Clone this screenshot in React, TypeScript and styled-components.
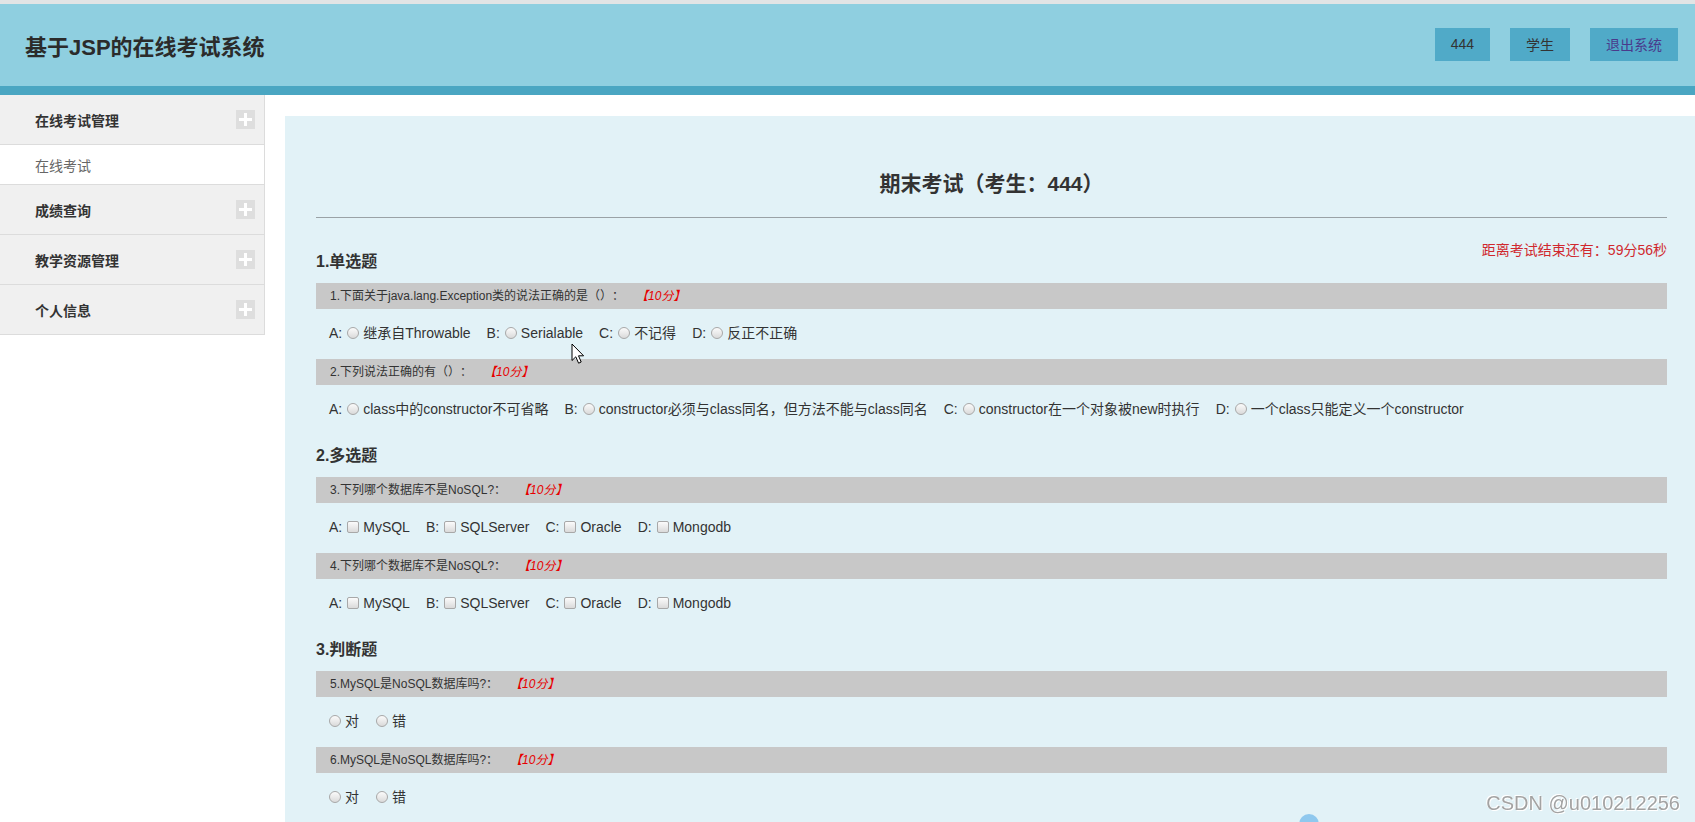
import styled, { createGlobalStyle } from "styled-components";

type Kind = "radio" | "checkbox";

interface Question {
  no: number;
  title: string;
  kind: Kind;
  options: string[];
  lettered: boolean;
}

interface Section {
  title: string;
  questions: Question[];
}

const sections: Section[] = [
  {
    title: "1.单选题",
    questions: [
      {
        no: 1,
        title: "下面关于java.lang.Exception类的说法正确的是（）：",
        kind: "radio",
        lettered: true,
        options: ["继承自Throwable", "Serialable", "不记得", "反正不正确"],
      },
      {
        no: 2,
        title: "下列说法正确的有（）：",
        kind: "radio",
        lettered: true,
        options: [
          "class中的constructor不可省略",
          "constructor必须与class同名，但方法不能与class同名",
          "constructor在一个对象被new时执行",
          "一个class只能定义一个constructor",
        ],
      },
    ],
  },
  {
    title: "2.多选题",
    questions: [
      {
        no: 3,
        title: "下列哪个数据库不是NoSQL?：",
        kind: "checkbox",
        lettered: true,
        options: ["MySQL", "SQLServer", "Oracle", "Mongodb"],
      },
      {
        no: 4,
        title: "下列哪个数据库不是NoSQL?：",
        kind: "checkbox",
        lettered: true,
        options: ["MySQL", "SQLServer", "Oracle", "Mongodb"],
      },
    ],
  },
  {
    title: "3.判断题",
    questions: [
      {
        no: 5,
        title: "MySQL是NoSQL数据库吗?：",
        kind: "radio",
        lettered: false,
        options: ["对", "错"],
      },
      {
        no: 6,
        title: "MySQL是NoSQL数据库吗?：",
        kind: "radio",
        lettered: false,
        options: ["对", "错"],
      },
    ],
  },
];

const menus = [
  { title: "在线考试管理", items: ["在线考试"] },
  { title: "成绩查询", items: [] },
  { title: "教学资源管理", items: [] },
  { title: "个人信息", items: [] },
];

const LETTERS = ["A", "B", "C", "D"];

export default function App() {
  return (
    <>
      <GlobalStyle />
      <Header>
        <Brand>基于JSP的在线考试系统</Brand>
        <HeaderActions>
          <HeaderButton href="#">444</HeaderButton>
          <HeaderButton href="#">学生</HeaderButton>
          <HeaderButton href="#" $link>
            退出系统
          </HeaderButton>
        </HeaderActions>
      </Header>

      <Layout>
        <Sidebar>
          {menus.map((menu) => (
            <div key={menu.title}>
              <MenuHeader>
                {menu.title}
                <PlusBox />
              </MenuHeader>
              {menu.items.map((item) => (
                <MenuItem key={item}>{item}</MenuItem>
              ))}
            </div>
          ))}
        </Sidebar>

        <Content>
          <Panel>
            <ExamTitle>期末考试（考生：444）</ExamTitle>

            {sections.map((section, i) => (
              <div key={section.title}>
                <SectionHead $first={i === 0}>
                  <SectionTitle>{section.title}</SectionTitle>
                  {i === 0 && <Timer>距离考试结束还有：59分56秒</Timer>}
                </SectionHead>

                {section.questions.map((q) => (
                  <div key={q.no}>
                    <QuestionBar>
                      {q.no}.{q.title}
                      <Score>【10分】</Score>
                    </QuestionBar>
                    <Options $lettered={q.lettered}>
                      {q.options.map((opt, idx) => (
                        <Option key={opt}>
                          {q.lettered && <Letter>{LETTERS[idx]}:</Letter>}
                          <Control
                            type={q.kind}
                            name={`q${q.no}`}
                            $kind={q.kind}
                            $lettered={q.lettered}
                          />
                          {opt}
                        </Option>
                      ))}
                    </Options>
                  </div>
                ))}
              </div>
            ))}
          </Panel>
        </Content>
      </Layout>

      <Cursor width="14" height="22" viewBox="0 0 14 22">
        <path
          d="M1 1 L1 17.5 L4.8 13.8 L7.6 20.2 L10.2 19 L7.5 12.8 L12.6 12.8 Z"
          fill="#fff"
          stroke="#000"
          strokeWidth="1"
          strokeLinejoin="round"
        />
      </Cursor>
      <FloatDot />
      <Watermark>CSDN @u010212256</Watermark>
    </>
  );
}

const GlobalStyle = createGlobalStyle`
  html, body {
    margin: 0;
    padding: 0;
    background: #fff;
  }
  body {
    font-family: "Liberation Sans", Arial, "Noto Sans CJK SC", sans-serif;
    font-size: 14px;
    color: #333;
    overflow: hidden;
    text-spacing-trim: space-all;
  }
`;

const Header = styled.header`
  display: flex;
  align-items: center;
  justify-content: space-between;
  height: 82px;
  padding: 0 17px 0 25px;
  background: #8fcfe0;
  border-top: 4px solid #e2e4e5;
  border-bottom: 9px solid #4aa6c2;
`;

const Brand = styled.h1`
  margin: 0;
  font-size: 22px;
  font-weight: bold;
  color: #2b2b2b;
`;

const HeaderActions = styled.div`
  display: flex;
  gap: 20px;
  margin-top: -2px;
`;

const HeaderButton = styled.a<{ $link?: boolean }>`
  display: flex;
  align-items: center;
  height: 33px;
  padding: 0 16px;
  background: #50aac8;
  color: ${(p) => (p.$link ? "#4a3a8c" : "#333")};
  font-size: 14px;
  text-decoration: none;
`;

const Layout = styled.div`
  display: flex;
  align-items: flex-start;
`;

const Sidebar = styled.nav`
  flex: 0 0 265px;
  box-sizing: border-box;
  border-right: 1px solid #dcdcdc;
`;

const MenuHeader = styled.div`
  display: flex;
  align-items: center;
  justify-content: space-between;
  height: 49px;
  padding: 0 9px 0 35px;
  background: #f0f0f0;
  border-bottom: 1px solid #dcdcdc;
  font-size: 14px;
  font-weight: bold;
  color: #333;
`;

const PlusBox = styled.span`
  position: relative;
  width: 19px;
  height: 19px;
  background: #dedede;

  &::before,
  &::after {
    content: "";
    position: absolute;
    background: #fff;
  }
  &::before {
    left: 3px;
    right: 3px;
    top: 8px;
    height: 3px;
  }
  &::after {
    top: 3px;
    bottom: 3px;
    left: 8px;
    width: 3px;
  }
`;

const MenuItem = styled.div`
  display: flex;
  align-items: center;
  height: 39px;
  padding-left: 35px;
  background: #fff;
  border-bottom: 1px solid #dcdcdc;
  font-size: 14px;
  color: #666;
`;

const Content = styled.main`
  flex: 1;
  padding: 21px 0 0 20px;
`;

const Panel = styled.section`
  min-height: 900px;
  padding: 0 28px 40px 31px;
  background: #e2f2f7;
`;

const ExamTitle = styled.h2`
  margin: 0;
  padding: 55px 0 21px;
  border-bottom: 1px solid #9aa2a6;
  text-align: center;
  font-size: 21px;
  line-height: 25px;
  font-weight: bold;
  color: #333;
`;

const SectionHead = styled.div<{ $first: boolean }>`
  display: flex;
  align-items: flex-end;
  justify-content: space-between;
  margin: ${(p) => (p.$first ? "23px" : "10px")} 0 10px;
`;

const SectionTitle = styled.h3`
  margin: 0;
  font-size: 16px;
  line-height: 22px;
  font-weight: bold;
  color: #333;
`;

const Timer = styled.div`
  margin-bottom: 14px;
  font-size: 14px;
  line-height: 18px;
  color: #d0282e;
`;

const QuestionBar = styled.div`
  height: 26px;
  padding-left: 14px;
  background: #c8c8c8;
  font-size: 12px;
  line-height: 26px;
  color: #333;
`;

const Score = styled.span`
  margin-left: 12px;
  color: #e60000;
  font-style: italic;
`;

const Options = styled.div<{ $lettered: boolean }>`
  display: flex;
  align-items: center;
  gap: ${(p) => (p.$lettered ? "16px" : "17px")};
  padding: 13px 0 15px 13px;
  font-size: 14px;
  line-height: 22px;
  color: #333;
`;

const Option = styled.label`
  display: inline-flex;
  align-items: center;
  white-space: nowrap;
`;

const Letter = styled.span`
  color: #333;
`;

const Control = styled.input<{ $kind: Kind; $lettered: boolean }>`
  appearance: none;
  box-sizing: border-box;
  width: 12px;
  height: 12px;
  margin: 0 4px 0 ${(p) => (p.$lettered ? "5px" : "0")};
  border: 1px solid #a8a8a8;
  border-radius: ${(p) => (p.$kind === "radio" ? "50%" : "2px")};
  background: linear-gradient(#fbfbfb, #dadada);
`;

const Cursor = styled.svg`
  position: fixed;
  left: 571px;
  top: 343px;
`;

const FloatDot = styled.div`
  position: fixed;
  left: 1299px;
  top: 814px;
  width: 20px;
  height: 20px;
  border-radius: 50%;
  background: #8fc8ee;
`;

const Watermark = styled.div`
  position: fixed;
  right: 15px;
  bottom: 7px;
  font-size: 20px;
  color: #a3a3a3;
  text-shadow: 1px 1px 0 #fff, -1px -1px 0 #fff;
  pointer-events: none;
`;
